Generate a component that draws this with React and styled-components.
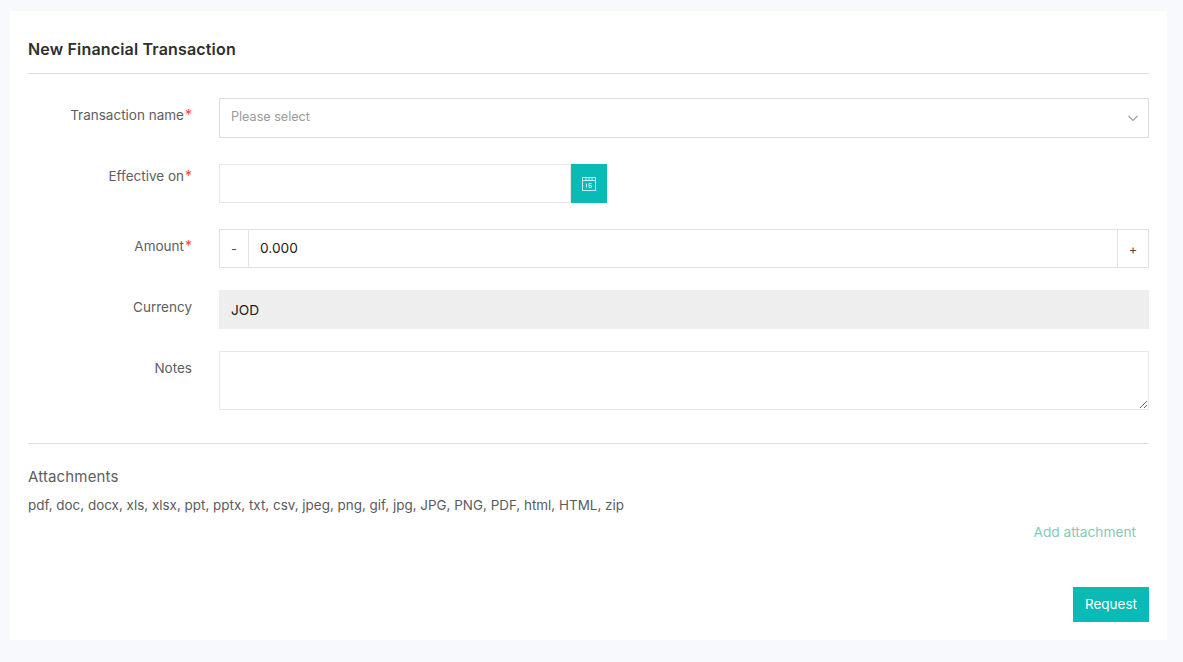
import React from 'react'
import styled, { createGlobalStyle } from 'styled-components'

const Global = createGlobalStyle`
  html, body {
    margin: 0;
    padding: 0;
    background: #f8f9fd;
    font-family: Inter, "Liberation Sans", sans-serif;
  }
  * { box-sizing: border-box; }
`

const Page = styled.div`
  height: 662px;
  padding: 11px 16px 22px 10px;
  overflow: hidden;
`

const Card = styled.div`
  background: #fff;
  height: 629px;
  padding: 0 18px;
`

const Title = styled.h1`
  margin: 0;
  height: 63px;
  padding-top: 29px;
  font-size: 16px;
  line-height: 18px;
  font-weight: 600;
  letter-spacing: 0.17px;
  color: #2f2f2f;
  border-bottom: 1px solid #dedede;
`

const Form = styled.div`
  padding-top: 24px;
`

const Row = styled.div`
  display: grid;
  grid-template-columns: 164px 1fr;
  column-gap: 27px;
  margin-bottom: ${p => p.$gap}px;
`

const Label = styled.label`
  text-align: right;
  font-size: 13.5px;
  line-height: 17px;
  color: #5e5e62;
  padding-top: ${p => p.$top}px;
`

const Star = styled.span`
  color: #f8481f;
  margin-left: 1px;
  font-size: 14px;
`

const Select = styled.div`
  height: 40px;
  display: flex;
  align-items: center;
  justify-content: space-between;
  padding: 0 9px 3px 11px;
  border: 1px solid #dedede;
  font-size: 12.6px;
  color: #9a9a9a;
`

const DateGroup = styled.div`
  display: flex;
  width: 388px;
`

const Input = styled.input`
  flex: 1;
  min-width: 0;
  height: 39px;
  border: 1px solid #e8e8e8;
  padding: 0 11px;
  font-family: inherit;
  font-size: 14px;
  color: #222;
  outline: none;
`

const CalendarButton = styled.div`
  width: 36px;
  height: 39px;
  background: #0abab5;
  display: flex;
  align-items: center;
  justify-content: center;
`

const Stepper = styled.div`
  display: flex;
  height: 39px;
  border: 1px solid #e2e2e2;
`

const StepButton = styled.div`
  width: ${p => p.$w}px;
  flex: none;
  display: flex;
  align-items: center;
  justify-content: center;
  font-size: 13px;
  color: #5c5048;
  ${p => (p.$left ? 'border-right' : 'border-left')}: 1px solid #e2e2e2;
`

const StepValue = styled.div`
  flex: 1;
  padding-left: 11px;
  line-height: 37px;
  font-size: 13.7px;
  color: #222;
`

const ReadOnly = styled.div`
  height: 39px;
  background: #eeeeee;
  padding-left: 12px;
  line-height: 40px;
  font-size: 13.7px;
  color: #222;
`

const Notes = styled.textarea`
  display: block;
  width: 100%;
  height: 59px;
  border: 1px solid #e8e8e8;
  padding: 6px 11px;
  font-family: inherit;
  outline: none;
`

const Divider = styled.hr`
  margin: 33px 0 0;
  border: 0;
  border-top: 1px solid #dedede;
`

const SectionTitle = styled.div`
  margin-top: 24px;
  font-size: 15px;
  line-height: 18px;
  color: #5e5e62;
  letter-spacing: 0.15px;
`

const Formats = styled.div`
  margin-top: 11px;
  font-size: 13.44px;
  line-height: 17px;
  color: #5a5a5e;
`

const AddRow = styled.div`
  display: flex;
  justify-content: flex-end;
  padding: 10px 13px 0 0;
`

const AddLink = styled.a`
  font-size: 13.7px;
  line-height: 17px;
  color: #7fcbb8;
`

const Footer = styled.div`
  display: flex;
  justify-content: flex-end;
  margin-top: 46px;
`

const RequestButton = styled.button`
  width: 76px;
  height: 35px;
  border: 0;
  background: #0abab5;
  color: #fff;
  font-family: inherit;
  font-size: 13.5px;
  font-weight: 400;
  padding: 0 0 2px;
`

const CalendarIcon = () => (
  <svg width="16" height="16" viewBox="0 0 16 16" fill="none" stroke="#fff" strokeOpacity="0.75">
    <rect x="1.5" y="1.5" width="13" height="13" />
    <path d="M1.5 4.5h13M5 1.5v3M8 1.5v3M11 1.5v3" />
    <path d="M5.5 7.5v4M10.5 7.5H8v4h2.5V9.5H8" />
  </svg>
)

const Chevron = () => (
  <svg width="12" height="12" viewBox="0 0 12 12" fill="none" stroke="#a59a92" strokeWidth="1.1" style={{ marginTop: 3 }}>
    <path d="M1.5 4L6 8.5 10.5 4" />
  </svg>
)

export default function App() {
  return (
    <Page>
      <Global />
      <Card>
        <Title>New Financial Transaction</Title>
        <Form>
          <Row $gap={26}>
            <Label $top={8}>Transaction name<Star>*</Star></Label>
            <Select>
              Please select
              <Chevron />
            </Select>
          </Row>
          <Row $gap={26}>
            <Label $top={3}>Effective on<Star>*</Star></Label>
            <DateGroup>
              <Input readOnly />
              <CalendarButton>
                <CalendarIcon />
              </CalendarButton>
            </DateGroup>
          </Row>
          <Row $gap={22}>
            <Label $top={8}>Amount<Star>*</Star></Label>
            <Stepper>
              <StepButton $w={29} $left>-</StepButton>
              <StepValue>0.000</StepValue>
              <StepButton $w={31}>+</StepButton>
            </Stepper>
          </Row>
          <Row $gap={22}>
            <Label $top={9}>Currency</Label>
            <ReadOnly>JOD</ReadOnly>
          </Row>
          <Row $gap={0}>
            <Label $top={9}>Notes</Label>
            <Notes readOnly />
          </Row>
        </Form>
        <Divider />
        <SectionTitle>Attachments</SectionTitle>
        <Formats>pdf, doc, docx, xls, xlsx, ppt, pptx, txt, csv, jpeg, png, gif, jpg, JPG, PNG, PDF, html, HTML, zip</Formats>
        <AddRow>
          <AddLink>Add attachment</AddLink>
        </AddRow>
        <Footer>
          <RequestButton>Request</RequestButton>
        </Footer>
      </Card>
    </Page>
  )
}
